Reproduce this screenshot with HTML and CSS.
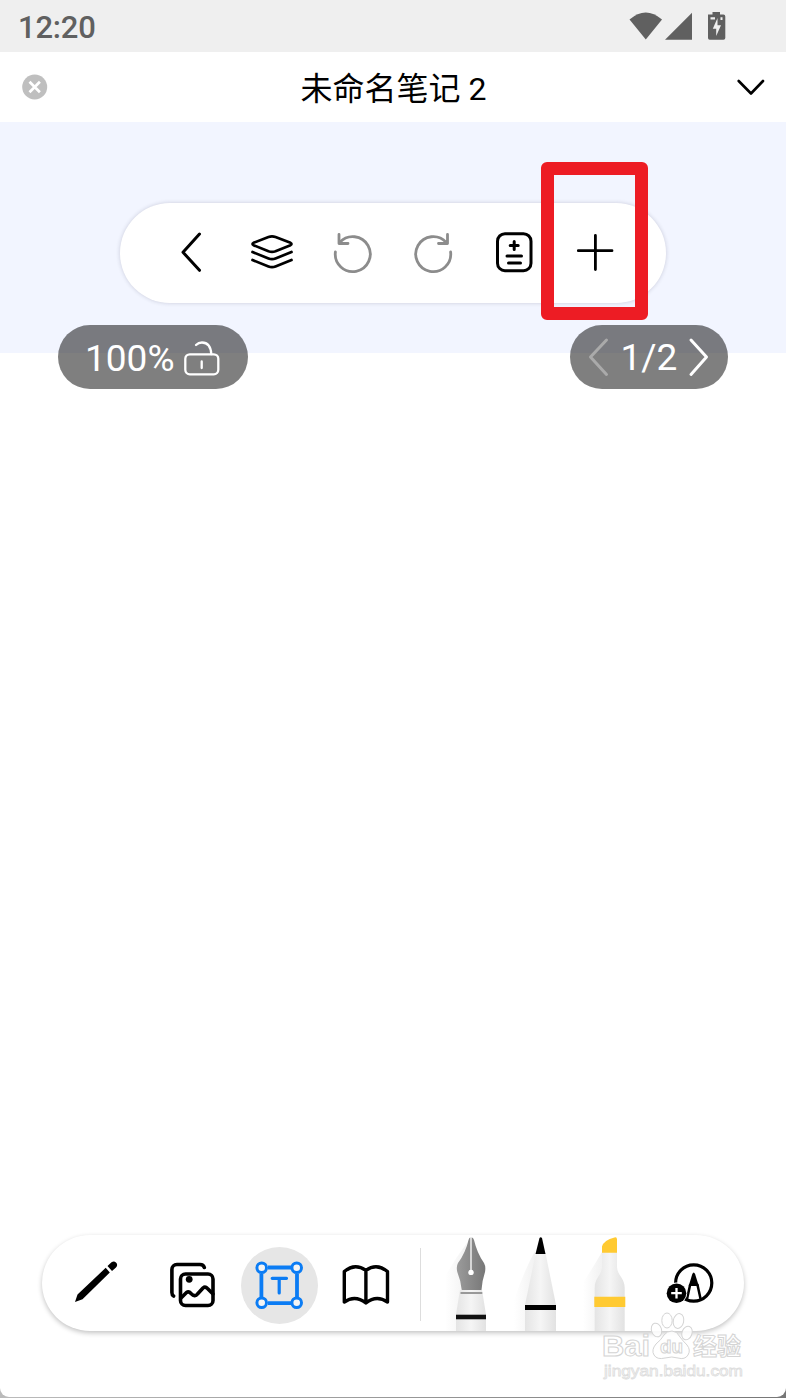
FILE: index.html
```html
<!DOCTYPE html>
<html lang="zh-CN">
<head>
<meta charset="utf-8">
<title>未命名笔记 2</title>
<meta name="viewport" content="width=device-width, initial-scale=1.0">
<link rel="stylesheet" href="styles.css">
</head>
<body>

<div class="app">
    <div class="status-bar">
        <span class="time">12:20</span>
        <svg class="status-icons" width="98" height="30" viewBox="0 0 98 30" fill="#606060">
            <path d="M1.5 7.5Q17.8-6.5 34 7.5L17.8 27.5Z"/>
            <path d="M37 27.7L64 .7V27.7Z"/>
            <path d="M80 2.5H84.500V0H92V2.500H95.500Q97.300 2.500 97.300 4.500V26Q97.300 27.800 95.500 27.800H81.700Q80 27.800 80 26Z"/>
            <path fill="#efefef" d="M82.500 5.300H87V7.500H82.500ZM92.500 5.300H94.500V8H92.500ZM89.500 6L84.800 16.800H88.200V24L93 13.300H89.500Z"/>
        </svg>
    </div>

    <header class="title-bar">
        <svg width="26" height="26" viewBox="0 0 26 26">
            <circle cx="12.700" cy="13" r="12.500" fill="#bfbfbf"/>
            <path d="M7.500 7.800L17.900 18.200M17.900 7.800L7.500 18.200" stroke="#fff" stroke-width="2.700"/>
        </svg>
        <h1>未命名笔记 2</h1>
        <svg width="30" height="20" viewBox="0 0 30 20" class="line">
            <path d="M2.700 4L15 16.500L27 4" stroke-width="2.600"/>
        </svg>
    </header>

    <main class="canvas">
        <nav class="toolbar">
            <div class="tool">
                <svg width="51" height="50" class="line"><path d="M34.500 6L18 24.300L34.500 42.300"/></svg>
            </div>
            <div class="tool">
                <svg width="51" height="50" class="line">
                    <path stroke-width="2.700" d="M22.500 9Q26 7.800 29.500 9L44.500 14.800Q46.500 16 44.500 17.200L29.500 23.200Q26 24.400 22.500 23.200L7.500 17.200Q5.500 16 7.500 14.800ZM6.500 24L22.500 30.500Q26 31.900 29.500 30.500L45.500 24M6.500 32L22.500 38.500Q26 39.900 29.500 38.500L45.500 32"/>
                </svg>
            </div>
            <div class="tool">
                <svg width="51" height="50" class="line muted">
                    <path d="M8.400 24A17.500 17.500 0 1 0 12.800 14.400M12 6.500V15.500H21"/>
                </svg>
            </div>
            <div class="tool">
                <svg width="51" height="50" class="line muted">
                    <path d="M42.600 24A17.500 17.500 0 1 1 38.200 14.400M39.500 6.500V15.500H30.500"/>
                </svg>
            </div>
            <div class="tool">
                <svg width="51" height="50" class="line">
                    <rect x="8.500" y="5.700" width="33.500" height="37" rx="7.500"/>
                    <path stroke-width="3" d="M25.200 13.500V21.500M21.200 17.500H29.200M18 28H32.500M19.500 35H31.500"/>
                </svg>
            </div>
            <div class="tool">
                <svg width="51" height="50" class="line"><path stroke-width="2.800" d="M25.400 7.500V41.500M8.300 22.700H42"/></svg>
                <span class="highlight"></span>
            </div>
        </nav>

        <div class="badges">
            <div class="badge zoom">
                <span>100%</span>
                <svg width="38" height="36" viewBox="0 0 38 36" class="line">
                    <rect x="2.300" y="14.300" width="33" height="20" rx="4.500" stroke-width="2.300"/>
                    <path stroke-width="2.300" d="M28.300 14Q27.500 2.500 19 2.500Q15.500 2.500 13 5M18.700 21.500V28"/>
                </svg>
            </div>
            <div class="badge pages">
                <svg width="22" height="40" class="line faded"><path d="M18.500 3L2.500 20L18.500 37.500"/></svg>
                <span>1/2</span>
                <svg width="22" height="40" class="line"><path d="M3 3L18.500 20L3 37.500"/></svg>
            </div>
        </div>
    </main>

    <footer class="pen-bar">
        <svg class="pencil" width="98" height="76">
            <path d="M28 55L30.500 47.500L58.700 20.800L62.800 25.500L35.500 52.300ZM60.500 19L64.500 15.300Q67 13.500 69.200 15.700Q71.200 18 69 20.500L65 24Z"/>
        </svg>
        <svg class="line" width="76" height="76">
            <g stroke-width="3.600">
                <rect x="25.500" y="27" width="32.500" height="31.500" rx="5"/>
                <path d="M18.600 49Q16.900 48 16.900 45.500V22.500A5 5 0 0 1 21.900 17.500H45Q48.500 17.500 49.300 20.500"/>
                <path d="M26.500 50.500L31.500 45.500Q33.800 44 36 46.500Q40 50.500 42.500 47L48 41Q50.200 39 52.500 41.500L58 47"/>
            </g>
            <circle cx="34.200" cy="32.300" r="3.400" fill="#000" stroke="none"/>
        </svg>
        <svg class="selected" width="77" height="77">
            <g fill="none" stroke="#0b7cf4">
                <path stroke-width="3.800" d="M27 20.500H50M27 56.200H50M20.400 27V50M56 27V50"/>
                <circle cx="20.700" cy="20.700" r="4.800" stroke-width="3"/>
                <circle cx="55.700" cy="20.700" r="4.800" stroke-width="3"/>
                <circle cx="20.700" cy="55.700" r="4.800" stroke-width="3"/>
                <circle cx="55.700" cy="55.700" r="4.800" stroke-width="3"/>
                <path stroke-width="3.200" stroke-linecap="round" d="M31.200 31.300H45.500M38.200 31.300V46"/>
            </g>
        </svg>
        <svg class="line book" width="76" height="76">
            <path stroke-width="3.400" d="M17.300 55V24.500Q28 15.500 38.900 23.500Q49.500 15.500 60.500 24.500V55Q49.500 47.500 38.900 56Q28 47.500 17.300 55ZM38.900 24V56"/>
        </svg>
        <span class="divider"></span>

        <div class="pens">
            <svg width="69" height="96">
                <defs>
                    <linearGradient id="shade">
                        <stop offset="0" stop-color="#777" stop-opacity="0"/>
                        <stop offset="1" stop-color="#777" stop-opacity=".1"/>
                    </linearGradient>
                    <linearGradient id="barrel">
                        <stop offset="0" stop-color="#e4e4e4"/>
                        <stop offset=".5" stop-color="#f5f5f5"/>
                        <stop offset="1" stop-color="#e2e2e2"/>
                    </linearGradient>
                    <linearGradient id="steel">
                        <stop offset="0" stop-color="#9b9b9b"/>
                        <stop offset="1" stop-color="#777"/>
                    </linearGradient>
                </defs>
                <path fill="url(#shade)" d="M8 96V42Q17 25 30 8L24 55V96Z"/>
                <path fill="url(#barrel)" d="M23 55H45L49 79.500V96H19V79.500Z"/>
                <path fill="url(#steel)" d="M34 2.300Q36.500 2.300 37 5Q40 18 47 28Q49 31.500 48 37Q45 46 44.500 55H24.700Q24 46 20.300 37Q19 31.500 21 28Q28.500 18 31.500 5Q32 2.300 34 2.300Z"/>
                <path stroke="#fff" stroke-width="1.300" d="M34 2V37"/>
                <circle cx="34" cy="37.400" r="2.700" fill="#fff"/>
                <path fill="#999" d="M23.500 57H45.300V59H23.500Z"/>
                <path fill="#111" d="M19 79.700H49V84.300H19Z"/>
            </svg>
            <svg width="69" height="96">
                <path fill="url(#shade)" d="M8 96V65Q18 36 29 16V96Z"/>
                <path fill="url(#barrel)" d="M29.800 18H39.500L50 70V96H19V70Z"/>
                <path d="M33.500 3Q34.700 1.600 36 3L39.500 19H29.500ZM19 70H50V75H19Z"/>
            </svg>
            <svg width="69" height="96">
                <path fill="url(#shade)" d="M8 96V48Q17 34 27 17V96Z"/>
                <path fill="url(#barrel)" d="M27 17H42V31C42 41 49.700 42 49.700 53V96H19.700V53C19.700 42 27 41 27 31Z"/>
                <path fill="#ffca32" d="M27 17.700V11.500Q29 5 39.500 2.500Q42 1.800 42 4.500V17.700ZM19.300 61.700H50.300V72H19.300Z"/>
            </svg>
        </div>

        <svg class="add-pen" width="52" height="76">
            <circle cx="29.700" cy="36" r="18.100" fill="none" stroke="#000" stroke-width="3.200"/>
            <path fill="none" stroke="#000" stroke-width="2.500" d="M26.300 37L22.800 53M33.300 37L36.800 53"/>
            <path d="M28.300 27Q29.700 24 31.100 27L34.800 39H24.700Z"/>
            <circle cx="12.500" cy="46.200" r="10.600" fill="#fff"/>
            <circle cx="12.500" cy="46.200" r="9.800"/>
            <path stroke="#fff" stroke-width="2.300" d="M12.500 41V51.500M7.200 46.200H17.800"/>
        </svg>
    </footer>

    <svg class="watermark" width="170" height="82" viewBox="0 0 170 82">
        <ellipse cx="59.500" cy="22" rx="5" ry="7" transform="rotate(-18 59.500 22)"/>
        <ellipse cx="70" cy="12.500" rx="5.200" ry="7.500"/>
        <ellipse cx="81.500" cy="13" rx="5.200" ry="7.500" transform="rotate(12 81.500 13)"/>
        <ellipse cx="90" cy="25" rx="5" ry="7" transform="rotate(20 90 25)"/>
        <path d="M75 23Q80 23 83 29Q86 33 90 37Q94 42 91 47Q88 52 81 50Q75 48 68 50Q60 52 57 47Q54 42 59 36Q64 32 67 27Q70 23 75 23Z"/>
        <text x="5" y="48" font-size="29" textLength="48" lengthAdjust="spacingAndGlyphs">Bai</text>
        <text x="63" y="45" font-size="19" textLength="23" lengthAdjust="spacingAndGlyphs">du</text>
        <text x="96" y="47" font-size="24" textLength="48">经验</text>
        <text class="site" x="7" y="68" font-size="15" textLength="139" lengthAdjust="spacingAndGlyphs">jingyan.baidu.com</text>
    </svg>
</div>

</body>
</html>
```

FILE: styles.css
```css
* {
    box-sizing: border-box;
}
body {
    margin: 0;
    font-family: Roboto, "Noto Sans CJK SC", sans-serif;
    background: linear-gradient(90deg, #bbb, #777);
    color: #000;
}
svg {
    display: block;
    flex-shrink: 0;
}
.app {
    position: relative;
    display: flex;
    flex-direction: column;
    height: 1397px;
    margin-bottom: 1px;
    background: #fff;
    border-radius: 0 0 9px 9px;
    overflow: hidden;
}
.line {
    fill: none;
    stroke: #000;
    stroke-width: 3;
    stroke-linecap: round;
    stroke-linejoin: round;
}
.muted {
    stroke: #8c8c8c;
    stroke-width: 2.8;
}

/* top of the screen */
.status-bar {
    display: flex;
    justify-content: space-between;
    align-items: center;
    height: 52px;
    padding: 2px 60px 0 18px;
    background: #efefef;
}
.time {
    font-size: 31px;
    font-weight: 500;
    letter-spacing: -0.2px;
    color: #606060;
}
.title-bar {
    display: flex;
    justify-content: space-between;
    align-items: center;
    height: 70px;
    padding: 0 20px 0 22px;
}
.title-bar h1 {
    margin: 0 0 3px 3px;
    font-size: 32px;
    font-weight: 400;
}

/* note canvas */
.canvas {
    flex: 1;
    padding: 81px 58px 0;
    background: linear-gradient(#f2f5ff 231px, #fff 231px);
}
.toolbar {
    display: flex;
    width: 546px;
    height: 100px;
    margin-left: 62px;
    padding: 0 30px;
    background: #fff;
    border-radius: 50px;
    box-shadow: 0 0 4px rgba(40, 40, 70, 0.2);
}
.tool {
    position: relative;
    display: flex;
    justify-content: center;
    align-items: center;
    width: 81px;
}
.highlight {
    position: absolute;
    left: -14px;
    top: -41px;
    width: 107px;
    height: 158px;
    border: 13px solid #ed1c24;
    border-radius: 6px;
}
.badges {
    display: flex;
    justify-content: space-between;
    margin-top: 22px;
}
.badge {
    display: flex;
    align-items: center;
    height: 64px;
    border-radius: 32px;
    background: rgba(0, 0, 0, 0.5);
    color: #fff;
    font-size: 37px;
}
.badge .line {
    stroke: #fff;
}
.badge .faded {
    stroke: #aaa;
}
.zoom {
    width: 190px;
    padding: 2px 0 0 27px;
    gap: 9px;
}
.pages {
    width: 158px;
    padding: 0 18px;
    justify-content: space-between;
}

/* pen bar */
.pen-bar {
    display: flex;
    gap: 10px;
    width: 702px;
    height: 96px;
    margin: 0 0 66px 42px;
    padding: 12px 0 0 5px;
    background: #fff;
    border-radius: 48px;
    box-shadow: 0 2px 5px rgba(0, 0, 0, 0.24);
}
.selected {
    border-radius: 50%;
    background: #e6e6e6;
}
.selected circle {
    fill: #f4f4f4;
}
.book {
    margin-left: -1px;
}
.divider {
    width: 1px;
    height: 73px;
    margin: 1px 6px 0 7px;
    background: #ddd;
}
.pens {
    display: flex;
    margin-top: -12px;
}
.add-pen {
    margin-left: 10px;
}

.watermark {
    position: absolute;
    left: 597px;
    top: 1308px;
    fill: rgba(255, 255, 255, 0.85);
    stroke: #d4d4d4;
    stroke-width: 1;
    font-family: "Liberation Sans", "Noto Sans CJK SC", sans-serif;
    font-weight: bold;
}
.site {
    stroke: #ddd;
    stroke-width: 0.8;
    font-weight: normal;
}
```
